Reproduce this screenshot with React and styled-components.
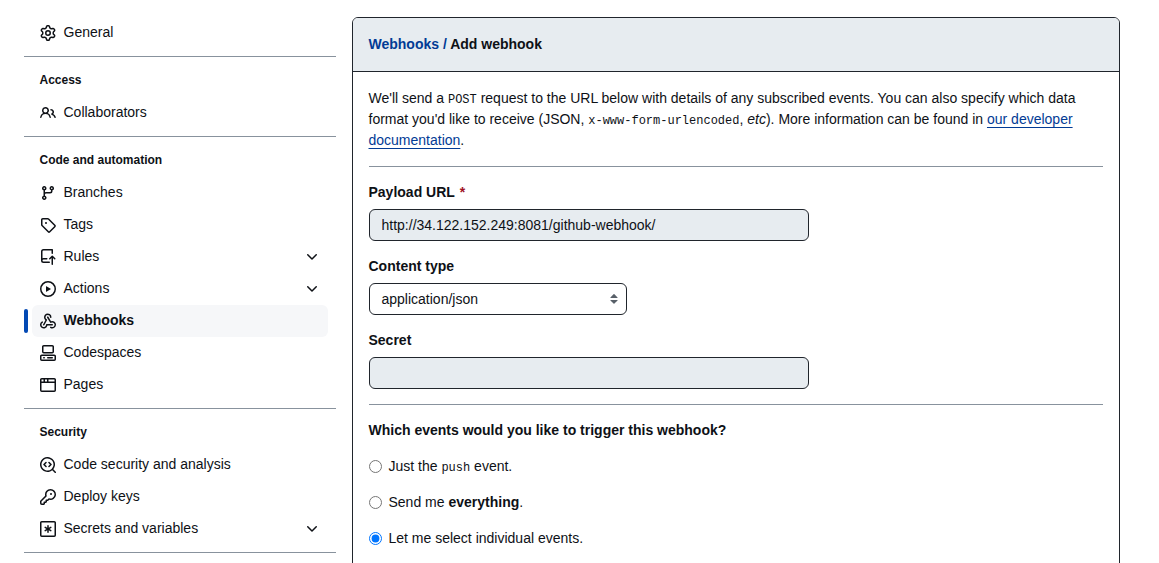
import React from "react";
import styled, { createGlobalStyle } from "styled-components";

const GlobalStyle = createGlobalStyle`
  *, *::before, *::after { box-sizing: border-box; }
  html, body { height: 563px; overflow: hidden; }
  body {
    margin: 0;
    background: #fff;
    color: #0e1116;
    font-family: "Liberation Sans", Arial, sans-serif;
    font-size: 14px;
    line-height: 1.5;
  }
`;

const Page = styled.div`
  display: flex;
  align-items: flex-start;
  height: 563px;
  overflow: hidden;
  padding-left: 23.5px;
`;

const Sidebar = styled.nav`
  flex: none;
  width: 312px;
  padding-top: 17px;
`;

const NavSection = styled.section`
  padding-bottom: 7px;
`;

const NavDivider = styled.hr`
  height: 1px;
  margin: 0;
  border: 0;
  background: #88929d;
`;

const NavHeading = styled.h3`
  margin: 0;
  padding: 14px 16px 8px;
  font-size: 12px;
  font-weight: 700;
  line-height: 18px;
`;

const NavList = styled.ul`
  margin: 0;
  padding: 0;
  list-style: none;
`;

const NavItem = styled.li`
  position: relative;
  display: flex;
  align-items: center;
  gap: 8px;
  height: 32px;
  margin: 0 8px;
  padding: 0 8px;
  border-radius: 6px;
  background: ${(p) => (p.$active ? "#f6f7f9" : "transparent")};
  font-weight: ${(p) => (p.$active ? 700 : 400)};

  &::before {
    content: "";
    display: ${(p) => (p.$active ? "block" : "none")};
    position: absolute;
    left: -8px;
    top: 4px;
    width: 4px;
    height: 24px;
    border-radius: 6px;
    background: #0349b4;
  }
`;

const NavLabel = styled.span`
  flex: 1;
  height: 22px;
  line-height: 20px;
`;

const Icon = styled.svg`
  flex: none;
  display: block;
  width: 16px;
  height: 16px;
  fill: ${(p) => p.$color || "currentColor"};
`;

const Panel = styled.main`
  flex: none;
  width: 768px;
  height: 600px;
  margin: 17px 0 0 16px;
  border: 1px solid #20252c;
  border-radius: 6px;
  overflow: hidden;
`;

const PanelHeader = styled.header`
  padding: 16px;
  border-bottom: 1px solid #20252c;
  background: #e7ecf0;
  font-weight: 700;
`;

const Crumb = styled.a`
  color: #023b95;
`;

const PanelBody = styled.div`
  padding: 16px;
`;

const Intro = styled.p`
  margin: 0;
`;

const Code = styled.code`
  font-family: "Liberation Mono", monospace;
  font-size: 12px;
`;

const TextLink = styled.a`
  color: #023b95;
  text-decoration: underline;
  text-decoration-skip-ink: none;
  text-underline-offset: 3.2px;
`;

const Rule = styled.hr`
  height: 1px;
  margin: 15px 0;
  border: 0;
  background: #88929d;
`;

const Field = styled.div`
  margin: 15px 0;
`;

const FieldLabel = styled.label`
  display: block;
  margin-bottom: 6px;
  font-weight: 700;
`;

const Required = styled.span`
  margin-left: 5px;
  color: #a0111f;
`;

const TextInput = styled.input`
  display: block;
  width: 440px;
  height: 32px;
  padding: 5px 12px;
  border: 1px solid #20252c;
  border-radius: 6px;
  outline: 0;
  background: #e7ecf0;
  color: #0e1116;
  font: inherit;
  line-height: 20px;
`;

const SelectBox = styled.div`
  display: flex;
  align-items: center;
  justify-content: space-between;
  width: 258px;
  height: 32px;
  padding: 0 4px 0 12px;
  border: 1px solid #20252c;
  border-radius: 6px;
`;

const EventLegend = styled.div`
  font-weight: 700;
`;

const RadioRow = styled.label`
  display: flex;
  align-items: center;
  gap: 7px;
  height: 21px;
  margin-top: 15px;
`;

const Radio = styled.input`
  width: 13px;
  height: 13px;
  margin: 0;
`;

const paths = {
  gear: "M8 0a8.2 8.2 0 0 1 .701.031C9.444.095 9.99.645 10.16 1.29l.288 1.107c.018.066.079.158.212.224.231.114.454.243.668.386.123.082.233.09.299.071l1.103-.303c.644-.176 1.392.021 1.82.63.27.385.506.792.704 1.218.315.675.111 1.422-.364 1.891l-.814.806c-.049.048-.098.147-.088.294.016.257.016.515 0 .772-.01.147.038.246.088.294l.814.806c.475.469.679 1.216.364 1.891a7.977 7.977 0 0 1-.704 1.217c-.428.61-1.176.807-1.82.63l-1.102-.302c-.067-.019-.177-.011-.3.071a5.909 5.909 0 0 1-.668.386c-.133.066-.194.158-.211.224l-.29 1.106c-.168.646-.715 1.196-1.458 1.26a8.006 8.006 0 0 1-1.402 0c-.743-.064-1.289-.614-1.458-1.26l-.289-1.106c-.018-.066-.079-.158-.212-.224a5.738 5.738 0 0 1-.668-.386c-.123-.082-.233-.09-.299-.071l-1.103.303c-.644.176-1.392-.021-1.82-.63a8.12 8.12 0 0 1-.704-1.218c-.315-.675-.111-1.422.363-1.891l.815-.806c.05-.048.098-.147.088-.294a6.214 6.214 0 0 1 0-.772c.01-.147-.038-.246-.088-.294l-.815-.806C.635 6.045.431 5.298.746 4.623a7.92 7.92 0 0 1 .704-1.217c.428-.61 1.176-.807 1.82-.63l1.102.302c.067.019.177.011.3-.071.214-.143.437-.272.668-.386.133-.066.194-.158.211-.224l.29-1.106C6.009.645 6.556.095 7.299.03 7.53.01 7.764 0 8 0Zm-.571 1.525c-.036.003-.108.036-.137.146l-.289 1.105c-.147.561-.549.967-.998 1.189-.173.086-.34.183-.5.29-.417.278-.97.423-1.529.27l-1.103-.303c-.109-.03-.175.016-.195.045-.22.312-.412.644-.573.99-.014.031-.021.11.059.19l.815.806c.411.406.562.957.53 1.456a4.709 4.709 0 0 0 0 .582c.032.499-.119 1.05-.53 1.456l-.815.806c-.081.08-.073.159-.059.19.162.346.353.677.573.989.02.03.085.076.195.046l1.102-.303c.56-.153 1.113-.008 1.53.27.161.107.328.204.501.29.447.222.85.629.997 1.189l.289 1.105c.029.109.101.143.137.146a6.6 6.6 0 0 0 1.142 0c.036-.003.108-.036.137-.146l.289-1.105c.147-.561.549-.967.998-1.189.173-.086.34-.183.5-.29.417-.278.97-.423 1.529-.27l1.103.303c.109.029.175-.016.195-.045.22-.313.411-.644.573-.99.014-.031.021-.11-.059-.19l-.815-.806c-.411-.406-.562-.957-.53-1.456a4.709 4.709 0 0 0 0-.582c-.032-.499.119-1.05.53-1.456l.815-.806c.081-.08.073-.159.059-.19a6.464 6.464 0 0 0-.573-.989c-.02-.03-.085-.076-.195-.046l-1.102.303c-.56.153-1.113.008-1.53-.27a4.44 4.44 0 0 0-.501-.29c-.447-.222-.85-.629-.997-1.189l-.289-1.105c-.029-.11-.101-.143-.137-.146a6.6 6.6 0 0 0-1.142 0ZM11 8a3 3 0 1 1-6 0 3 3 0 0 1 6 0ZM9.5 8a1.5 1.5 0 1 0-3.001.001A1.5 1.5 0 0 0 9.5 8Z",
  people: "M2 5.5a3.5 3.5 0 1 1 5.898 2.549 5.508 5.508 0 0 1 3.034 4.084.75.75 0 1 1-1.482.235 4 4 0 0 0-7.9 0 .75.75 0 0 1-1.482-.236A5.507 5.507 0 0 1 3.102 8.05 3.493 3.493 0 0 1 2 5.5ZM11 4a3.001 3.001 0 0 1 2.22 5.018 5.01 5.01 0 0 1 2.56 3.012.749.749 0 0 1-.885.954.752.752 0 0 1-.549-.514 3.507 3.507 0 0 0-2.522-2.372.75.75 0 0 1-.574-.73v-.352a.75.75 0 0 1 .416-.672A1.5 1.5 0 0 0 11 5.5.75.75 0 0 1 11 4Zm-5.5-.5a2 2 0 1 0-.001 3.999A2 2 0 0 0 5.5 3.5Z",
  branch: "M9.5 3.25a2.25 2.25 0 1 1 3 2.122V6A2.5 2.5 0 0 1 10 8.5H6a1 1 0 0 0-1 1v1.128a2.251 2.251 0 1 1-1.5 0V5.372a2.25 2.25 0 1 1 1.5 0v1.836A2.493 2.493 0 0 1 6 7h4a1 1 0 0 0 1-1v-.628A2.25 2.25 0 0 1 9.5 3.25Zm-6 0a.75.75 0 1 0 1.5 0 .75.75 0 0 0-1.5 0Zm8.25-.75a.75.75 0 1 0 0 1.5.75.75 0 0 0 0-1.5ZM4.25 12a.75.75 0 1 0 0 1.5.75.75 0 0 0 0-1.5Z",
  tag: "M1 7.775V2.75C1 1.784 1.784 1 2.75 1h5.025c.464 0 .91.184 1.238.513l6.25 6.25a1.75 1.75 0 0 1 0 2.474l-5.026 5.026a1.75 1.75 0 0 1-2.474 0l-6.25-6.25A1.752 1.752 0 0 1 1 7.775Zm1.5 0c0 .066.026.13.073.177l6.25 6.25a.25.25 0 0 0 .354 0l5.025-5.025a.25.25 0 0 0 0-.354l-6.25-6.25a.25.25 0 0 0-.177-.073H2.75a.25.25 0 0 0-.25.25ZM6 5a1 1 0 1 1 0 2 1 1 0 0 1 0-2Z",
  repoPush: "M1 2.5A2.5 2.5 0 0 1 3.5 0h8.75a.75.75 0 0 1 .75.75v3.5a.75.75 0 0 1-1.5 0V1.5h-8a1 1 0 0 0-1 1v6.708A2.493 2.493 0 0 1 3.5 9h3.25a.75.75 0 0 1 0 1.5H3.5a1 1 0 0 0 0 2h5.75a.75.75 0 0 1 0 1.5H3.5A2.5 2.5 0 0 1 1 11.5Zm13.23 7.79-.001-.001-1.224-1.224v6.184a.75.75 0 0 1-1.5 0V9.066L10.28 10.29a.75.75 0 0 1-1.06-1.061l2.505-2.504a.75.75 0 0 1 1.06 0L15.29 9.23a.751.751 0 0 1-.018 1.042.751.751 0 0 1-1.042.018Z",
  play: "M8 0a8 8 0 1 1 0 16A8 8 0 0 1 8 0ZM1.5 8a6.5 6.5 0 1 0 13 0 6.5 6.5 0 0 0-13 0Zm4.879-2.773 4.264 2.559a.25.25 0 0 1 0 .428l-4.264 2.559A.25.25 0 0 1 6 10.559V5.442a.25.25 0 0 1 .379-.215Z",
  webhook: "M5.5 4.25a2.25 2.25 0 0 1 4.5 0 .75.75 0 0 0 1.5 0 3.75 3.75 0 1 0-6.14 2.889l-2.272 4.258a.75.75 0 0 0 1.324.706L7 7.25a.75.75 0 0 0-.309-1.015A2.25 2.25 0 0 1 5.5 4.25ZM7.364 3.607a.75.75 0 0 1 1.03.257l2.608 4.349a3.75 3.75 0 1 1-.628 6.785.75.75 0 0 1 .752-1.299 2.25 2.25 0 1 0-.033-3.88.75.75 0 0 1-1.03-.256L7.107 4.636a.75.75 0 0 1 .257-1.03ZM2.9 8.776A.75.75 0 0 1 2.625 9.8 2.25 2.25 0 1 0 6 11.75a.75.75 0 0 1 .75-.751h5.5a.75.75 0 0 1 0 1.5H7.425a3.751 3.751 0 1 1-5.55-3.998.75.75 0 0 1 1.024.274Z",
  codespaces: "M0 11.25c0-.966.784-1.75 1.75-1.75h12.5c.966 0 1.75.784 1.75 1.75v3A1.75 1.75 0 0 1 14.25 16H1.75A1.75 1.75 0 0 1 0 14.25Zm2-9.5C2 .784 2.784 0 3.75 0h8.5C13.216 0 14 .784 14 1.75v5a1.75 1.75 0 0 1-1.75 1.75h-8.5A1.75 1.75 0 0 1 2 6.75Zm1.75-.25a.25.25 0 0 0-.25.25v5c0 .138.112.25.25.25h8.5a.25.25 0 0 0 .25-.25v-5a.25.25 0 0 0-.25-.25Zm-2 9.5a.25.25 0 0 0-.25.25v3c0 .138.112.25.25.25h12.5a.25.25 0 0 0 .25-.25v-3a.25.25 0 0 0-.25-.25ZM7 12.75a.75.75 0 0 1 .75-.75h4.5a.75.75 0 0 1 0 1.5h-4.5a.75.75 0 0 1-.75-.75Zm-4 0a.75.75 0 0 1 .75-.75h.5a.75.75 0 0 1 0 1.5h-.5a.75.75 0 0 1-.75-.75Z",
  browser: "M0 2.75C0 1.784.784 1 1.75 1h12.5c.966 0 1.75.784 1.75 1.75v10.5A1.75 1.75 0 0 1 14.25 15H1.75A1.75 1.75 0 0 1 0 13.25ZM14.5 6h-13v7.25c0 .138.112.25.25.25h12.5a.25.25 0 0 0 .25-.25Zm-6-3.5v2h6V2.75a.25.25 0 0 0-.25-.25ZM5 2.5v2h2v-2Zm-3.25 0a.25.25 0 0 0-.25.25V4.5h2v-2Z",
  codescan: "M8.47 4.97a.75.75 0 0 0 0 1.06L9.94 7.5 8.47 8.97a.75.75 0 1 0 1.06 1.06l2-2a.75.75 0 0 0 0-1.06l-2-2a.75.75 0 0 0-1.06 0ZM6.53 6.03a.75.75 0 0 0-1.06-1.06l-2 2a.75.75 0 0 0 0 1.06l2 2a.75.75 0 1 0 1.06-1.06L5.06 7.5l1.47-1.47ZM12.246 13.307a7.501 7.501 0 1 1 1.06-1.06l2.474 2.473a.749.749 0 1 1-1.06 1.06l-2.474-2.473ZM1.5 7.5a6.002 6.002 0 0 0 3.608 5.504 6.002 6.002 0 0 0 6.486-1.117.748.748 0 0 1 .292-.293A6 6 0 1 0 1.5 7.5Z",
  key: "M10.5 0a5.499 5.499 0 1 1-1.288 10.848l-.932.932a.749.749 0 0 1-.53.22H7v.75a.749.749 0 0 1-.22.53l-.5.5a.749.749 0 0 1-.53.22H5v.75a.749.749 0 0 1-.22.53l-.5.5a.749.749 0 0 1-.53.22h-2A1.75 1.75 0 0 1 0 14.25v-2c0-.199.079-.389.22-.53l4.932-4.932A5.5 5.5 0 0 1 10.5 0Zm-4 5.5c-.001.431.069.86.205 1.269a.75.75 0 0 1-.181.768L1.5 12.56v1.69c0 .138.112.25.25.25h1.69l.06-.06v-1.19a.75.75 0 0 1 .75-.75h1.19l.06-.06v-1.19a.75.75 0 0 1 .75-.75h1.19l1.023-1.025a.75.75 0 0 1 .768-.18A4 4 0 1 0 6.5 5.5ZM11 6a1 1 0 1 1 0-2 1 1 0 0 1 0 2Z",
  asterisk: "M0 1.75C0 .784.784 0 1.75 0h12.5C15.216 0 16 .784 16 1.75v12.5A1.75 1.75 0 0 1 14.25 16H1.75A1.75 1.75 0 0 1 0 14.25ZM1.75 1.5a.25.25 0 0 0-.25.25v12.5c0 .138.112.25.25.25h12.5a.25.25 0 0 0 .25-.25V1.75a.25.25 0 0 0-.25-.25ZM8 4a.75.75 0 0 1 .75.75V6.7l1.69-.975a.75.75 0 0 1 .75 1.3L9.5 8l1.69.976a.75.75 0 0 1-.75 1.298L8.75 9.3v1.951a.75.75 0 0 1-1.5 0V9.299l-1.69.976a.75.75 0 0 1-.75-1.3L6.5 8l-1.69-.975a.75.75 0 0 1 .75-1.3l1.69.976V4.75A.75.75 0 0 1 8 4Z",
  chevron: "M12.78 5.22a.749.749 0 0 1 0 1.06l-4.25 4.25a.749.749 0 0 1-1.06 0L3.22 6.28a.749.749 0 1 1 1.06-1.06L8 8.939l3.72-3.719a.749.749 0 0 1 1.06 0Z",
  sort: "M4.427 9.427l3.396 3.396a.251.251 0 0 0 .354 0l3.396-3.396A.25.25 0 0 0 11.396 9H4.604a.25.25 0 0 0-.177.427zM4.423 6.47L7.82 3.072a.25.25 0 0 1 .354 0L11.57 6.47a.25.25 0 0 1-.177.427H4.6a.25.25 0 0 1-.177-.427z",
};

function Glyph({ name, color }) {
  return (
    <Icon viewBox="0 0 16 16" aria-hidden="true" $color={color}>
      <path d={paths[name]} />
    </Icon>
  );
}

const sections = [
  { items: [{ icon: "gear", label: "General" }] },
  { title: "Access", items: [{ icon: "people", label: "Collaborators" }] },
  {
    title: "Code and automation",
    items: [
      { icon: "branch", label: "Branches" },
      { icon: "tag", label: "Tags" },
      { icon: "repoPush", label: "Rules", expandable: true },
      { icon: "play", label: "Actions", expandable: true },
      { icon: "webhook", label: "Webhooks", active: true },
      { icon: "codespaces", label: "Codespaces" },
      { icon: "browser", label: "Pages" },
    ],
  },
  {
    title: "Security",
    items: [
      { icon: "codescan", label: "Code security and analysis" },
      { icon: "key", label: "Deploy keys" },
      { icon: "asterisk", label: "Secrets and variables", expandable: true },
    ],
  },
];

export default function App() {
  return (
    <>
      <GlobalStyle />
      <Page>
        <Sidebar>
          {sections.map((section, i) => (
            <React.Fragment key={i}>
              <NavSection>
                {section.title && <NavHeading>{section.title}</NavHeading>}
                <NavList>
                  {section.items.map((item) => (
                    <NavItem key={item.label} $active={item.active}>
                      <Glyph name={item.icon} />
                      <NavLabel>{item.label}</NavLabel>
                      {item.expandable && <Glyph name="chevron" />}
                    </NavItem>
                  ))}
                </NavList>
              </NavSection>
              <NavDivider />
            </React.Fragment>
          ))}
        </Sidebar>
        <Panel>
          <PanelHeader>
            <Crumb>Webhooks /</Crumb> Add webhook
          </PanelHeader>
          <PanelBody>
            <Intro>
              We'll send a <Code>POST</Code> request to the URL below with details of any
              subscribed events. You can also specify which data format you'd like to receive
              (JSON, <Code>x-www-form-urlencoded</Code>, <em>etc</em>). More information can be
              found in <TextLink>our developer documentation</TextLink>.
            </Intro>
            <Rule />
            <Field>
              <FieldLabel htmlFor="url">
                Payload URL<Required>*</Required>
              </FieldLabel>
              <TextInput id="url" defaultValue="http://34.122.152.249:8081/github-webhook/" />
            </Field>
            <Field>
              <FieldLabel>Content type</FieldLabel>
              <SelectBox>
                application/json
                <Glyph name="sort" color="#586069" />
              </SelectBox>
            </Field>
            <Field>
              <FieldLabel htmlFor="secret">Secret</FieldLabel>
              <TextInput id="secret" />
            </Field>
            <Rule />
            <EventLegend>Which events would you like to trigger this webhook?</EventLegend>
            <RadioRow>
              <Radio type="radio" name="events" />
              <span>
                Just the <Code>push</Code> event.
              </span>
            </RadioRow>
            <RadioRow>
              <Radio type="radio" name="events" />
              <span>
                Send me <strong>everything</strong>.
              </span>
            </RadioRow>
            <RadioRow>
              <Radio type="radio" name="events" defaultChecked />
              <span>Let me select individual events.</span>
            </RadioRow>
          </PanelBody>
        </Panel>
      </Page>
    </>
  );
}
